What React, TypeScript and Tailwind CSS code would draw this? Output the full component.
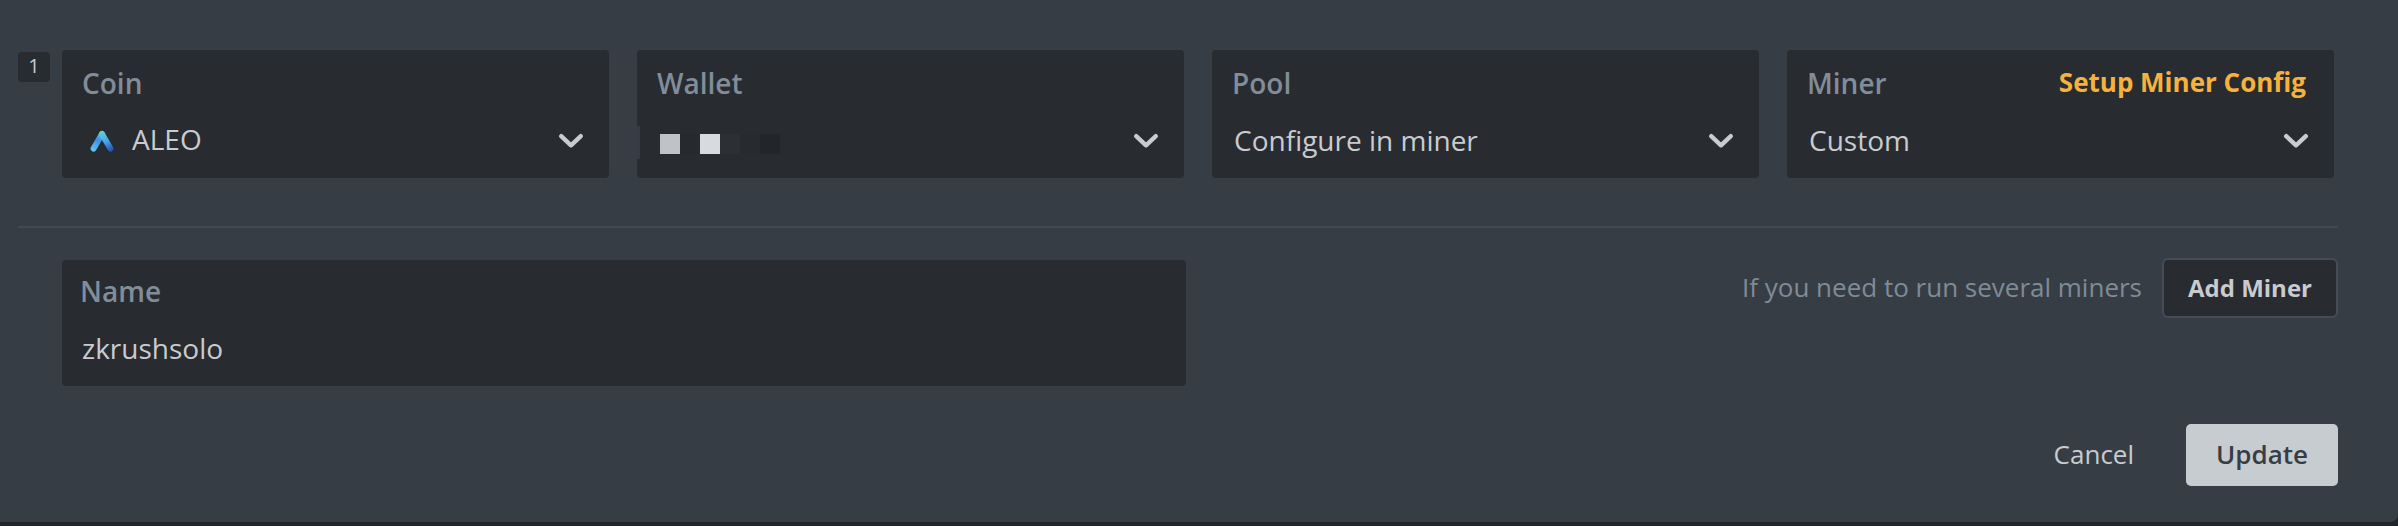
import type { ReactNode } from "react";

function Chevron() {
  return (
    <svg width="28" height="20" viewBox="0 0 28 20" fill="none" className="mr-px shrink-0">
      <path d="M4.2 5.2 L14 14.3 L23.8 5.2" stroke="#c8ccd0" strokeWidth="4.4" strokeLinecap="round" strokeLinejoin="round" />
    </svg>
  );
}

function AleoLogo() {
  return (
    <svg width="24" height="22" viewBox="0 0 24 22" fill="none" className="shrink-0">
      <defs>
        <linearGradient id="aleo-left" x1="12" y1="2" x2="3" y2="20" gradientUnits="userSpaceOnUse">
          <stop offset="0" stopColor="#5fc8dc" />
          <stop offset="0.45" stopColor="#3f8fe6" />
          <stop offset="1" stopColor="#5cc3f0" />
        </linearGradient>
        <linearGradient id="aleo-right" x1="12" y1="2" x2="21" y2="20" gradientUnits="userSpaceOnUse">
          <stop offset="0" stopColor="#63ccd0" />
          <stop offset="0.5" stopColor="#4aa5f0" />
          <stop offset="1" stopColor="#2a56b4" />
        </linearGradient>
      </defs>
      <path d="M12 4 L3.6 18.6" stroke="url(#aleo-left)" strokeWidth="6" strokeLinecap="round" />
      <path d="M12 4 L20.4 18.6" stroke="url(#aleo-right)" strokeWidth="6" strokeLinecap="round" />
    </svg>
  );
}

interface SelectCardProps {
  label: string;
  action?: string;
  children: ReactNode;
}

function SelectCard({ label, action, children }: SelectCardProps) {
  return (
    <div className="flex h-32 w-[547px] flex-col rounded-[4px] bg-[#282b2f] pt-[13px] pl-5 pr-[23px]">
      <div className="flex h-10 items-start justify-between">
        <span className="text-[28px] leading-10 font-semibold text-[#818d99]">{label}</span>
        {action && (
          <a className="mr-[5px] text-[26px] leading-[38px] font-bold whitespace-nowrap text-[#f6b23c]">{action}</a>
        )}
      </div>
      <div className="mt-4 flex h-11 items-center justify-between">
        {children}
        <Chevron />
      </div>
    </div>
  );
}

const valueText = "pb-[2px] pl-[2px] text-[28px] leading-[42px] text-[#c8cbcf]";

export default function App() {
  return (
    <div className="flex h-[526px] w-[2398px] flex-col bg-[#22242b] font-['Open_Sans','Noto_Sans',sans-serif]">
      <main className="flex h-[522px] flex-col rounded-br-[8px] bg-[#373d45] pt-[50px] pl-[18px] pr-[60px]">
        <section className="flex h-32 items-start">
          <span className="mt-[2px] mr-3 flex h-[30px] w-8 shrink-0 items-start justify-center rounded-[4px] bg-[#282b2f] text-[20px] leading-[28px] text-[#c8cbcf]">
            1
          </span>
          <div className="flex gap-7">
            <SelectCard label="Coin">
              <span className="flex items-center pl-2 text-[28px] text-[#c8cbcf]">
                <AleoLogo />
                <span className="ml-[18px] pb-1 leading-10">ALEO</span>
              </span>
            </SelectCard>
            <SelectCard label="Wallet">
              <span className="-ml-5 flex items-center">
                <span className="mt-[3px] mr-5 h-[33px] w-[3px] bg-[#373b45]" />
                <span className="mt-[6px] flex">
                  <span className="size-5 bg-[#bfc2c7]" />
                  <span className="size-5 bg-[#26292d]" />
                  <span className="size-5 bg-[#d7dade]" />
                  <span className="size-5 bg-[#2c2f33]" />
                  <span className="size-5 bg-[#282a2e]" />
                  <span className="size-5 bg-[#222529]" />
                </span>
              </span>
            </SelectCard>
            <SelectCard label="Pool">
              <span className={valueText}>Configure in miner</span>
            </SelectCard>
            <SelectCard label="Miner" action="Setup Miner Config">
              <span className={valueText}>Custom</span>
            </SelectCard>
          </div>
        </section>
        <hr className="mt-12 h-[2px] border-0 bg-[#424954]" />
        <section className="mt-8 flex items-start justify-between pl-11">
          <label className="flex h-[126px] w-[1124px] flex-col rounded-[4px] bg-[#282b2f] pt-[11px] pl-[18px]">
            <span className="text-[28px] leading-10 font-semibold text-[#818d99]">Name</span>
            <span className="mt-[17px] pl-[2px] text-[28px] leading-10 text-[#c8cbcf]">zkrushsolo</span>
          </label>
          <div className="-mt-[2px] flex items-start">
            <span className="mr-5 text-[26px] leading-[58px] whitespace-nowrap text-[#7f8b97]">If you need to run several miners</span>
            <button className="flex h-[60px] w-[176px] items-center justify-center rounded-[6px] border-2 border-[#464c57] bg-[#282b2f] text-[24px] leading-[56px] font-bold whitespace-nowrap text-[#c8cbcf]">
              Add Miner
            </button>
          </div>
        </section>
        <footer className="mt-[38px] flex items-start justify-end">
          <button className="mr-[52px] text-[26px] leading-[60px] text-[#c8cbcf]">Cancel</button>
          <button className="flex h-[62px] w-[152px] items-start justify-center rounded-[5px] bg-[#c7ccd0] text-[26px] leading-[60px] font-semibold text-[#373d45]">
            Update
          </button>
        </footer>
      </main>
    </div>
  );
}
